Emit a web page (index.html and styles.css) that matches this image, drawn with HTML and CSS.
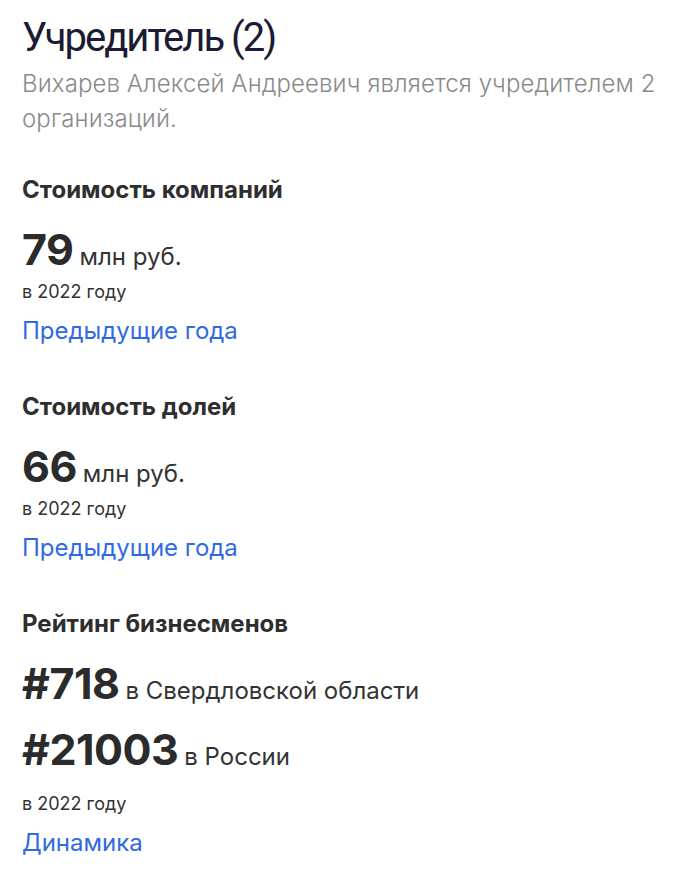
FILE: index.html
```html
<!DOCTYPE html>
<html lang="ru">

<head>
  <meta charset="UTF-8">
  <meta name="viewport" content="width=device-width, initial-scale=1.0">
  <title>Учредитель</title>
  <link rel="stylesheet" href="styles.css">
</head>

<body>
  <div class="page">
    <h1 class="title">Учредитель (2)</h1>
    <p class="lead">Вихарев Алексей Андреевич является учредителем 2 организаций.</p>

    <div class="block">
      <h2>Стоимость компаний</h2>
      <div class="value"><span class="num">79</span> <span class="unit">млн руб.</span></div>
      <div class="year">в 2022 году</div>
      <a class="link" href="#">Предыдущие года</a>
    </div>

    <div class="block">
      <h2>Стоимость долей</h2>
      <div class="value"><span class="num">66</span> <span class="unit">млн руб.</span></div>
      <div class="year">в 2022 году</div>
      <a class="link" href="#">Предыдущие года</a>
    </div>

    <div class="block">
      <h2>Рейтинг бизнесменов</h2>
      <div class="value"><span class="num">#718</span> <span class="unit">в Свердловской области</span></div>
      <div class="value second"><span class="num">#21003</span> <span class="unit">в России</span></div>
      <div class="year wide">в 2022 году</div>
      <a class="link" href="#">Динамика</a>
    </div>
  </div>
</body>

</html>
```

FILE: styles.css
```css
body {
  margin: 0;
  background-color: #ffffff;
  font-family: 'Inter', 'Noto Sans', sans-serif;
  color: #2b2b2b;
}

.page {
  padding: 14px 22px 20px 22px;
}

.title {
  font-family: 'Roboto', sans-serif;
  font-weight: 400;
  font-size: 40px;
  line-height: 48px;
  color: #1b1b33;
  margin: 0;
  letter-spacing: -2px;
}

.lead {
  margin: 4px 0 0 0;
  font-size: 24px;
  line-height: 35px;
  font-weight: 300;
  color: #8a8a8a;
  letter-spacing: 0.1px;
}

.block {
  margin-top: 39px;
}

.block + .block {
  margin-top: 45px;
}

.block h2 {
  margin: 0;
  font-size: 24px;
  line-height: 30px;
  font-weight: 700;
  color: #2e2e2e;
}

.value {
  margin-top: 18px;
  display: flex;
  align-items: baseline;
  gap: 6px;
}

.value.second {
  margin-top: 14px;
}

.num {
  font-size: 43px;
  line-height: 52px;
  font-weight: 700;
  color: #2b2b2b;
  letter-spacing: -0.5px;
}

.unit {
  font-size: 24px;
  font-weight: 400;
  color: #333333;
}

.year {
  margin-top: 4px;
  font-size: 18px;
  line-height: 26px;
  color: #333333;
}

.year.wide {
  margin-top: 16px;
}

.link {
  display: inline-block;
  margin-top: 10px;
  font-size: 24px;
  line-height: 32px;
  color: #2f6be0;
  text-decoration: none;
}
```
